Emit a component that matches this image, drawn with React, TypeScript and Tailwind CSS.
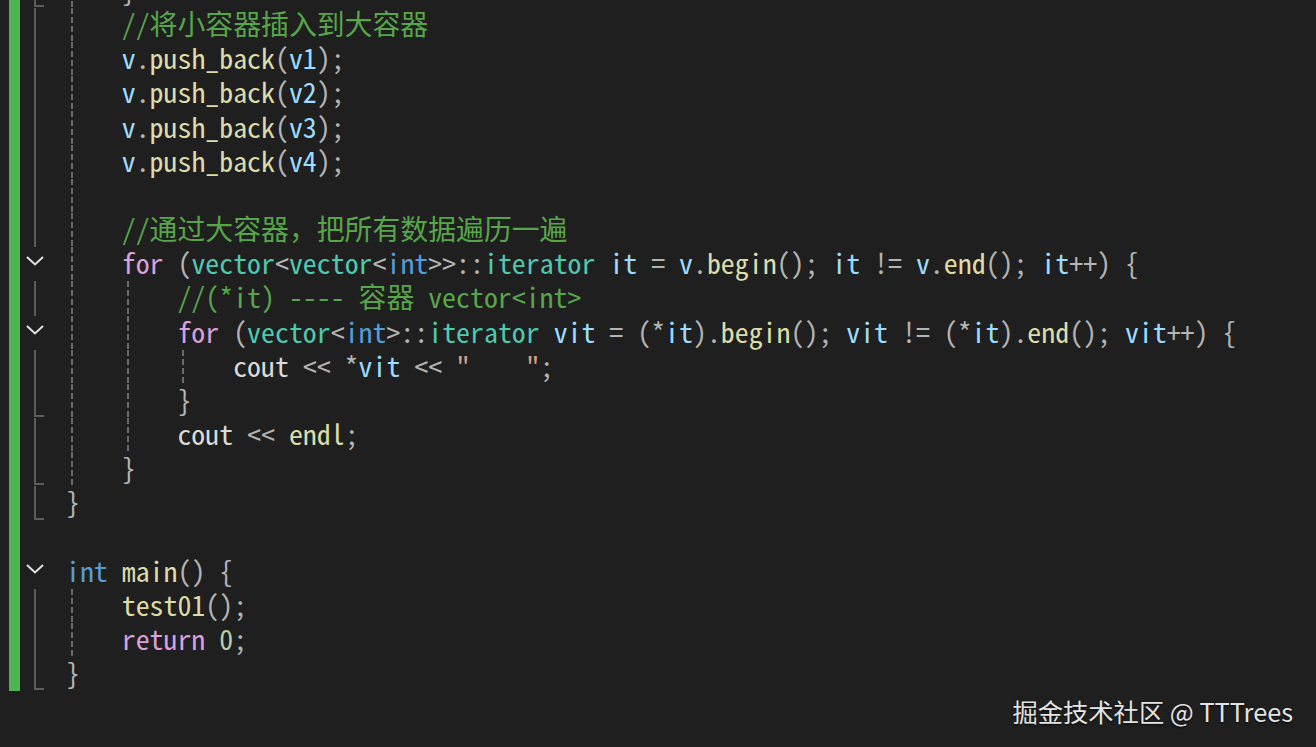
import React from "react";

type Tok = [string, string];

const P = "text-[#b4b4b4]";
const V = "text-[#9cdcfe]";
const F = "text-[#dcdcaa]";
const T = "text-[#4ec9b0]";
const K = "text-[#569cd6]";
const C = "text-[#d8a0df]";
const G = "text-[#57a64a]";
const N = "text-[#b5cea8]";
const S = "text-[#d69d85]";
const W = "text-[#dadada]";

type Fold = "tee" | "line" | "chev" | "end" | "none";

interface Line {
  fold: Fold;
  indent: number;
  toks: Tok[];
}

const L = (fold: Fold, indent: number, toks: Tok[]): Line => ({ fold, indent, toks });

const lines: Line[] = [
  L("tee", 1, [["}", P]]),
  L("line", 1, [["//将小容器插入到大容器", G]]),
  L("line", 1, [["v", V], [".", P], ["push_back", F], ["(", P], ["v1", V], [");", P]]),
  L("line", 1, [["v", V], [".", P], ["push_back", F], ["(", P], ["v2", V], [");", P]]),
  L("line", 1, [["v", V], [".", P], ["push_back", F], ["(", P], ["v3", V], [");", P]]),
  L("line", 1, [["v", V], [".", P], ["push_back", F], ["(", P], ["v4", V], [");", P]]),
  L("line", 1, [[" ", P]]),
  L("line", 1, [["//通过大容器，把所有数据遍历一遍", G]]),
  L("chev", 1, [
    ["for", C], [" (", P], ["vector", T], ["<", P], ["vector", T], ["<", P], ["int", K], [">>::", P],
    ["iterator", T], [" ", P], ["it", V], [" = ", P], ["v", V], [".", P], ["begin", F], ["(); ", P], ["it", V],
    [" != ", P], ["v", V], [".", P], ["end", F], ["(); ", P], ["it", V], ["++) {", P],
  ]),
  L("line", 2, [["//(*it) ---- 容器 vector<int>", G]]),
  L("chev", 2, [
    ["for", C], [" (", P], ["vector", T], ["<", P], ["int", K], [">::", P], ["iterator", T], [" ", P],
    ["vit", V], [" = (*", P], ["it", V], [").", P], ["begin", F], ["(); ", P], ["vit", V], [" != (*", P], ["it", V],
    [").", P], ["end", F], ["(); ", P], ["vit", V], ["++) {", P],
  ]),
  L("line", 3, [["cout", W], [" << *", P], ["vit", V], [" << ", P], ["\"    \"", S], [";", P]]),
  L("tee", 2, [["}", P]]),
  L("line", 2, [["cout", W], [" << ", P], ["endl", F], [";", P]]),
  L("tee", 1, [["}", P]]),
  L("end", 0, [["}", P]]),
  L("none", 0, [[" ", P]]),
  L("chev", 0, [["int", K], [" ", P], ["main", F], ["() {", P]]),
  L("line", 1, [["test01", F], ["();", P]]),
  L("line", 1, [["return", C], [" ", P], ["0", N], [";", P]]),
  L("end", 0, [["}", P]]),
];

function FoldCell({ fold }: { fold: Fold }) {
  return (
    <div className="flex h-full w-[46px] shrink-0 items-stretch pl-[14px]">
      {(fold === "line") && <div className="w-[10px] border-l-2 border-[#5c5c5c]" />}
      {(fold === "tee" || fold === "end") && (
        <div className="mb-[1px] w-[10px] border-l-2 border-b-2 border-[#5c5c5c]" />
      )}
      {fold === "chev" && (
        <div className="flex items-center pb-[6px] -ml-[8px]">
          <svg width="18" height="10" viewBox="0 0 18 10">
            <polyline points="1,1 9,8.5 17,1" fill="none" stroke="#e2e2e2" strokeWidth="2" />
          </svg>
        </div>
      )}
    </div>
  );
}

function Indent() {
  return (
    <div className="flex h-full w-[55.72px] shrink-0 pl-[5px]">
      <div className="w-[2px] h-full bg-[repeating-linear-gradient(to_bottom,#696969_0px,#696969_6px,transparent_6px,transparent_9px)]" />
    </div>
  );
}

export default function App() {
  return (
    <div className="relative w-[1316px] h-[747px] overflow-hidden bg-[#1f1f1f]">
      <div className="flex flex-col -mt-[26px]">
        {lines.map((ln, i) => (
          <div key={i} className="flex h-[34.16px] items-stretch">
            <div className="w-[9px] shrink-0" />
            <div className="w-[11px] shrink-0 bg-[#4fb552]" />
            <FoldCell fold={ln.fold} />
            <div className="flex flex-1 items-stretch">
              {Array.from({ length: ln.indent }).map((_, g) => (
                <Indent key={g} />
              ))}
              <div className="flex items-center pb-[4px] whitespace-pre font-['Noto_Sans_Mono_CJK_SC','Liberation_Mono',monospace] text-[27.86px] leading-[34.16px]">
                <span>
                  {ln.toks.map(([t, c], j) => (
                    <span key={j} className={c}>
                      {t}
                    </span>
                  ))}
                </span>
              </div>
            </div>
          </div>
        ))}
      </div>
      <div className="absolute right-[23px] top-[694px] text-[25.3px] leading-[34px] text-[#e4e4e4] font-['Noto_Sans_CJK_SC','Noto_Sans',sans-serif] [text-shadow:0_1px_2px_rgba(0,0,0,0.8)]">
        掘金技术社区 @ TTTrees
      </div>
    </div>
  );
}
